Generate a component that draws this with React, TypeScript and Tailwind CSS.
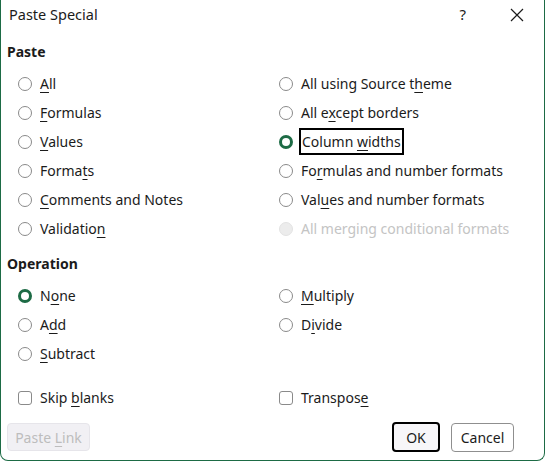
import type { ReactNode } from 'react'

const green = 'border-[#1d6b45]'

function Radio({ checked, disabled, children }: { checked?: boolean; disabled?: boolean; children: ReactNode }) {
  return (
    <div className="flex h-[29px] items-center gap-[8px]">
      {checked ? (
        <span className={`h-[14px] w-[14px] rounded-full border-[3.5px] ${green} bg-white`} />
      ) : disabled ? (
        <span className="h-[14px] w-[14px] rounded-full border border-[#e3e3e3] bg-[#ececec]" />
      ) : (
        <span className="h-[14px] w-[14px] rounded-full border border-[#8a8a8a] bg-white" />
      )}
      <span className={disabled ? 'text-[#c4c4c4]' : 'text-[#1b1b1b]'}>{children}</span>
    </div>
  )
}

function Check({ children }: { children: ReactNode }) {
  return (
    <div className="flex h-[29px] items-center gap-[8px]">
      <span className="h-[14px] w-[14px] rounded-[3px] border border-[#8a8a8a] bg-white" />
      <span className="text-[#1b1b1b]">{children}</span>
    </div>
  )
}

const U = ({ children }: { children: ReactNode }) => <u className="underline-offset-[3px]">{children}</u>

export default function App() {
  return (
    <div
      className="h-[462px] w-[546px] bg-white text-[14px]"
      style={{ fontFamily: '"Noto Sans", "Open Sans", sans-serif' }}
    >
      <div className="flex h-[461px] w-[545px] flex-col rounded-b-[8px] border-r border-b border-l border-[#1d6b45]">
        <div className="flex h-[29px] items-center pl-[8px] pr-[20px] text-[#1b1b1b]">
          <span className="flex-1 text-[14.5px]">Paste Special</span>
          <span className="mr-[44px] text-[15px]">?</span>
          <svg width="14" height="14" viewBox="0 0 14 14" className="text-[#1b1b1b]">
            <path d="M1 1 L13 13 M13 1 L1 13" stroke="currentColor" strokeWidth="1.2" />
          </svg>
        </div>

        <div className="mt-[12px] pl-[6px] font-bold text-[#1b1b1b]">Paste</div>
        <div className="mt-[7px] grid grid-cols-[261px_1fr] pl-[17px]">
          <div className="flex flex-col">
            <Radio><U>A</U>ll</Radio>
            <Radio><U>F</U>ormulas</Radio>
            <Radio><U>V</U>alues</Radio>
            <Radio>Forma<U>t</U>s</Radio>
            <Radio><U>C</U>omments and Notes</Radio>
            <Radio>Validatio<U>n</U></Radio>
          </div>
          <div className="flex flex-col">
            <Radio>All using Source t<U>h</U>eme</Radio>
            <Radio>All e<U>x</U>cept borders</Radio>
            <Radio checked>
              <span className="-ml-[2px] border-2 border-black px-[1px] py-[2px]">
                Column <U>w</U>idths
              </span>
            </Radio>
            <Radio>Fo<U>r</U>mulas and number formats</Radio>
            <Radio>Val<U>u</U>es and number formats</Radio>
            <Radio disabled>All merging conditional formats</Radio>
          </div>
        </div>

        <div className="mt-[10px] pl-[6px] font-bold text-[#1b1b1b]">Operation</div>
        <div className="mt-[7px] grid grid-cols-[261px_1fr] pl-[17px]">
          <div className="flex flex-col">
            <Radio checked>N<U>o</U>ne</Radio>
            <Radio>A<U>d</U>d</Radio>
            <Radio><U>S</U>ubtract</Radio>
          </div>
          <div className="flex flex-col">
            <Radio><U>M</U>ultiply</Radio>
            <Radio>D<U>i</U>vide</Radio>
          </div>
        </div>

        <div className="mt-[15px] grid grid-cols-[261px_1fr] pl-[17px]">
          <Check>Skip <U>b</U>lanks</Check>
          <Check>Transpos<U>e</U></Check>
        </div>

        <div className="mt-[10px] flex items-center pl-[6px] pr-[30px]">
          <button className="h-[28px] w-[83px] rounded-[4px] border border-[#e6e5ea] bg-[#f1f0f4] text-[#bdbdbd]">
            Paste <U>L</U>ink
          </button>
          <div className="flex-1" />
          <button className="h-[30px] w-[48px] rounded-[4px] border-2 border-black bg-[#f7f6f9] text-[#1b1b1b]">
            OK
          </button>
          <button className="ml-[11px] h-[29px] w-[63px] rounded-[4px] border border-[#8f8f8f] bg-white text-[#1b1b1b]">
            Cancel
          </button>
        </div>
      </div>
    </div>
  )
}
